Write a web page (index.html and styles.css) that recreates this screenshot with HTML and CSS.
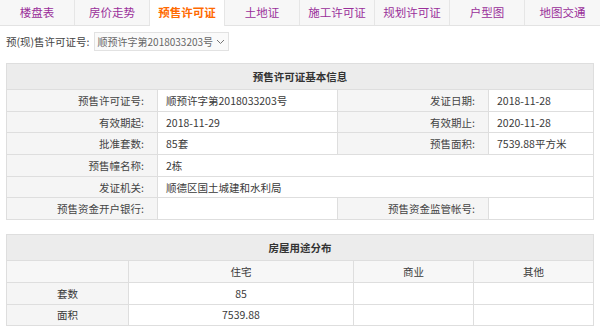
FILE: index.html
```html
<!DOCTYPE html>
<html lang="zh-CN">
<head>
    <meta charset="UTF-8">
    <title>预售许可证</title>
    <link rel="stylesheet" href="styles.css">
</head>
<body>
    <ul class="tabs">
        <li>楼盘表</li>
        <li>房价走势</li>
        <li class="active">预售许可证</li>
        <li>土地证</li>
        <li>施工许可证</li>
        <li>规划许可证</li>
        <li>户型图</li>
        <li>地图交通</li>
    </ul>

    <div class="picker">
        <span class="picker-label">预(现)售许可证号:</span>
        <div class="select">
            <span>顺预许字第2018033203号</span>
            <svg width="9" height="6" viewBox="0 0 9 6"><path d="M1 1 L4.5 4.5 L8 1" fill="none" stroke="#777" stroke-width="1"/></svg>
        </div>
    </div>

    <table class="info">
        <tr><th colspan="4">预售许可证基本信息</th></tr>
        <tr>
            <td class="lbl">预售许可证号:</td><td class="val">顺预许字第2018033203号</td>
            <td class="lbl">发证日期:</td><td class="val">2018-11-28</td>
        </tr>
        <tr>
            <td class="lbl">有效期起:</td><td class="val">2018-11-29</td>
            <td class="lbl">有效期止:</td><td class="val">2020-11-28</td>
        </tr>
        <tr>
            <td class="lbl">批准套数:</td><td class="val">85套</td>
            <td class="lbl">预售面积:</td><td class="val">7539.88平方米</td>
        </tr>
        <tr>
            <td class="lbl">预售幢名称:</td><td class="val" colspan="3">2栋</td>
        </tr>
        <tr>
            <td class="lbl">发证机关:</td><td class="val" colspan="3">顺德区国土城建和水利局</td>
        </tr>
        <tr>
            <td class="lbl">预售资金开户银行:</td><td class="val"></td>
            <td class="lbl">预售资金监管帐号:</td><td class="val"></td>
        </tr>
    </table>

    <table class="usage">
        <tr><th colspan="4">房屋用途分布</th></tr>
        <tr class="head">
            <td class="c1"></td><td class="c2">住宅</td><td class="c3">商业</td><td class="c4">其他</td>
        </tr>
        <tr>
            <td class="c1">套数</td><td>85</td><td></td><td></td>
        </tr>
        <tr>
            <td class="c1">面积</td><td>7539.88</td><td></td><td></td>
        </tr>
    </table>

    <div class="more"></div>
</body>
</html>
```

FILE: styles.css
```css
body {
    margin: 0;
    font-family: "Noto Sans CJK SC", "Noto Sans", sans-serif;
    font-size: 10.5px;
    color: #3a3a3a;
    background: #fff;
}

.tabs {
    display: flex;
    margin: 0;
    padding: 0;
    list-style: none;
    height: 25px;
    background: #f7f7f7;
    border-bottom: 1px solid #e3e3e3;
}

.tabs li {
    width: 75px;
    text-align: center;
    line-height: 25px;
    font-size: 11.5px;
    color: #9a2f9a;
    border-right: 1px solid #e6e6e6;
    box-sizing: border-box;
}

.tabs li:last-child {
    border-right: none;
}

.tabs li.active {
    background: #fff;
    color: #ff6a00;
    font-weight: bold;
    height: 26px;
}

.picker {
    display: flex;
    align-items: center;
    padding: 6px 6px 0 6px;
    height: 19px;
}

.picker-label {
    color: #444;
    margin-right: 4px;
}

.select {
    display: flex;
    align-items: center;
    gap: 3px;
    height: 17px;
    padding: 0 3px;
    border: 1px solid #e2e2e2;
    background: #fafafa;
    color: #666;
    font-size: 10px;
}

table {
    border-collapse: collapse;
    width: 588px;
    margin-left: 6px;
}

.info {
    margin-top: 12px;
}

th {
    height: 23px;
    background: #ececec;
    border: 1px solid #dedede;
    font-size: 10.5px;
    color: #333;
}

td {
    height: 20.7px;
    padding: 0;
    border: 1px solid #dedede;
}

.lbl {
    width: 137px;
    text-align: right;
    padding-right: 13px;
    background: #f5f5f5;
    color: #444;
}

.val {
    padding-left: 8px;
}

.info .val:nth-child(2) {
    width: 171px;
}

.usage {
    margin-top: 14px;
}

.usage td {
    text-align: center;
}

.usage .c1 {
    width: 121px;
    background: #f5f5f5;
}

.usage .head td {
    background: #f7f7f7;
}

.usage .c2 {
    width: 224px;
}

.usage .c3 {
    width: 119px;
}

.more {
    margin-top: 4px;
    border-top: 1px solid #ececec;
    height: 10px;
}
```
